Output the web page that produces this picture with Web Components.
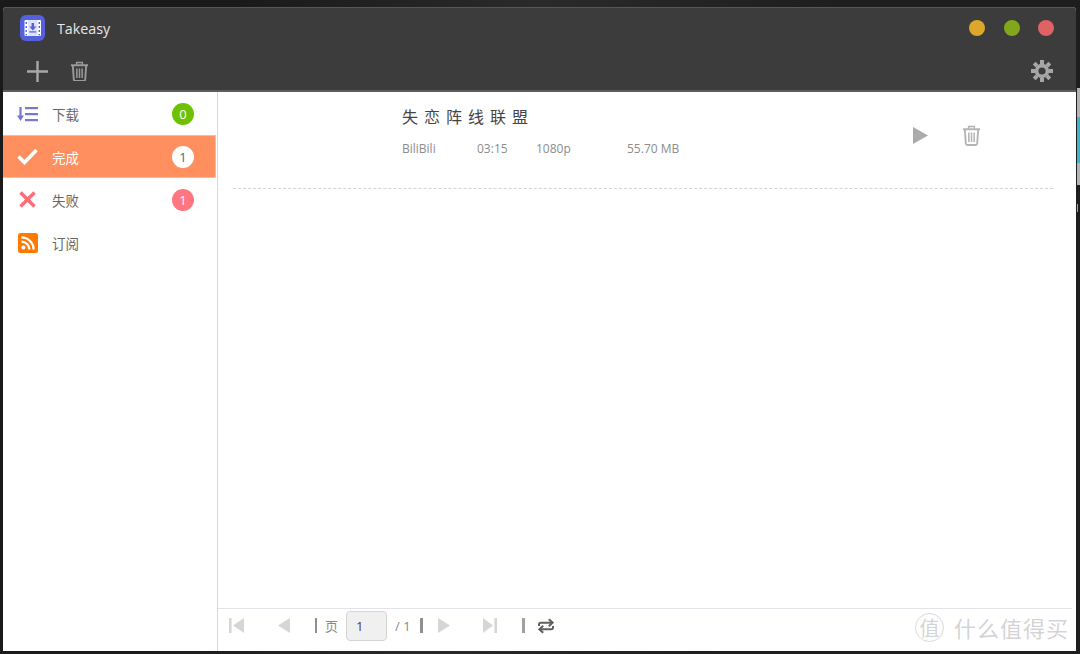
<!DOCTYPE html>
<html lang="zh">
<head>
<meta charset="utf-8">
<title>Takeasy</title>
<style>
    html, body { margin: 0; height: 100%; background: #1b1b1b; overflow: hidden; }
    body { font-family: "Open Sans", "Noto Sans CJK SC", sans-serif; }
</style>
</head>
<body>
<take-desktop>
    <take-window>
        <take-header slot="header"></take-header>
        <take-sidebar slot="side">
            <take-nav-item label="下载" icon="list" count="0" tone="green"></take-nav-item>
            <take-nav-item label="完成" icon="check" count="1" tone="white" active></take-nav-item>
            <take-nav-item label="失败" icon="cross" count="1" tone="red"></take-nav-item>
            <take-nav-item label="订阅" icon="rss"></take-nav-item>
        </take-sidebar>
        <take-task slot="main" name="失恋阵线联盟" source="BiliBili" duration="03:15" quality="1080p" size="55.70 MB"></take-task>
        <take-pager slot="footer"></take-pager>
    </take-window>
</take-desktop>

<script>
// Shared icon paths
const TRASH = (color, w) => `
    <svg width="${w}" height="${w * 22 / 20}" viewBox="0 0 20 22" fill="none" stroke="${color}">
        <path d="M1 4.5h18" stroke-width="2"/>
        <path d="M7 4V1.6h6V4" stroke-width="1.6"/>
        <path d="M3 5l1 14.5q.1 1.5 1.6 1.5h8.8q1.5 0 1.6-1.5L17 5" stroke-width="2"/>
        <path d="M7.2 8v10M10 8v10M12.8 8v10" stroke-width="1.6"/>
    </svg>`;

const NAV_ICONS = {
    list: `<svg width="21" height="16" viewBox="0 0 21 16" fill="#7878d2">
        <rect x="8" y="1" width="13" height="2.2"/><rect x="8" y="7" width="13" height="2.2"/><rect x="8" y="13" width="13" height="2.2"/>
        <rect x="2.4" y="1" width="2.2" height="10"/><path d="M0 9.5h7L3.5 15z"/></svg>`,
    check: `<svg width="21" height="17" viewBox="0 0 21 17" fill="none" stroke="#fff" stroke-width="3.6"><path d="M1.5 8.5l6 6L19.5 2"/></svg>`,
    cross: `<svg width="17" height="17" viewBox="0 0 17 17" fill="none" stroke="#fa6e78" stroke-width="3.4"><path d="M1.5 1.5l14 14M15.5 1.5l-14 14"/></svg>`,
    rss: `<svg width="20" height="20" viewBox="0 0 20 20"><rect width="20" height="20" rx="2.5" fill="#ff7a00"/>
        <circle cx="5.4" cy="14.6" r="2" fill="#fff"/>
        <path d="M3.4 8.6a8 8 0 0 1 8 8M3.4 4.4a12.2 12.2 0 0 1 12.2 12.2" fill="none" stroke="#fff" stroke-width="2.3"/></svg>`
};

class TakeDesktop extends HTMLElement {
    constructor() {
        super();
        this.attachShadow({mode: "open"}).innerHTML = `
            <style>
                :host {
                    display: block;
                    position: relative;
                    width: 1080px;
                    height: 654px;
                    box-sizing: border-box;
                    padding: 7px 4px 3px 3px;
                    background: linear-gradient(100deg, #1a1a1a 20%, #2a2a2a 45%, #1e1e1e 70%);
                }
                /* Sliver of the neighbouring window on the right edge */
                .peek {
                    position: absolute;
                    right: 0;
                    top: 88px;
                    width: 3px;
                    height: 97px;
                    background: linear-gradient(#b4b4b4 30%, #3fb3c9 30%, #3fb3c9 77%, #b4b4b4 77%);
                }
                .speck {
                    position: absolute;
                    left: 1077px;
                    top: 204px;
                    width: 1px;
                    height: 8px;
                    background: #c9a24a;
                }
            </style>
            <slot></slot>
            <div class="peek"></div>
            <div class="speck"></div>
        `;
    }
}

class TakeWindow extends HTMLElement {
    constructor() {
        super();
        this.attachShadow({mode: "open"}).innerHTML = `
            <style>
                :host {
                    display: grid;
                    grid-template-columns: 215px 1fr;
                    grid-template-rows: 85px 1fr 43px;
                    grid-template-areas: "header header" "side main" "side footer";
                    height: 100%;
                    background: #fff;
                    border-radius: 4px 4px 0 0;
                    overflow: hidden;
                    position: relative;
                }
                ::slotted([slot=header]) { grid-area: header; }
                ::slotted([slot=side]) { grid-area: side; }
                ::slotted([slot=main]) { grid-area: main; }
                ::slotted([slot=footer]) { grid-area: footer; }
                /* The site's watermark stamped over the corner of the shot */
                .mark {
                    position: absolute;
                    right: 7px;
                    bottom: 8px;
                    display: flex;
                    align-items: center;
                    gap: 10px;
                    color: rgba(150,150,150,.42);
                    font: 22px "Noto Sans CJK SC", sans-serif;
                    letter-spacing: 1px;
                }
                .seal {
                    width: 27px;
                    height: 27px;
                    border: 1px solid rgba(170,170,170,.45);
                    border-radius: 50%;
                    display: flex;
                    align-items: center;
                    justify-content: center;
                    font-size: 20px;
                    letter-spacing: 0;
                }
            </style>
            <slot name="header"></slot>
            <slot name="side"></slot>
            <slot name="main"></slot>
            <slot name="footer"></slot>
            <div class="mark"><span class="seal">值</span><span>什么值得买</span></div>
        `;
    }
}

class TakeHeader extends HTMLElement {
    constructor() {
        super();
        this.attachShadow({mode: "open"}).innerHTML = `
            <style>
                :host {
                    display: flex;
                    flex-direction: column;
                    background: #3c3c3c;
                    border-top: 1px solid #575757;
                    border-bottom: 2px solid #5e5e5e;
                    box-sizing: border-box;
                    color: #e6e6e6;
                }
                .title { display: flex; align-items: center; height: 40px; padding: 0 19px 0 17px; }
                .logo { display: block; margin-right: 12px; }
                .name { font: 14.3px "Open Sans", sans-serif; flex: 1; }
                .dots { display: flex; gap: 18.5px; margin-right: 3px; }
                .dots i { width: 16px; height: 16px; border-radius: 50%; }
                .tools { display: flex; align-items: center; flex: 1; padding: 4px 23px 0 24px; }
                .tools svg { display: block; }
                .plus { margin-right: 22px; }
                .gear { margin-left: auto; }
            </style>
            <div class="title">
                <svg class="logo" width="25" height="26" viewBox="0 0 25 26">
                    <rect width="25" height="26" rx="6" fill="#5560de"/>
                    <rect x="4.5" y="5" width="16.5" height="16" rx="1" fill="#fff"/>
                    <rect x="8" y="5" width="9.5" height="16" fill="#dfe2fb"/>
                    <g fill="#5560de">
                        <rect x="5.5" y="7" width="1.4" height="2"/><rect x="5.5" y="11" width="1.4" height="2"/><rect x="5.5" y="15" width="1.4" height="2"/><rect x="5.5" y="19" width="1.4" height="1.4"/>
                        <rect x="18.6" y="7" width="1.4" height="2"/><rect x="18.6" y="11" width="1.4" height="2"/><rect x="18.6" y="15" width="1.4" height="2"/><rect x="18.6" y="19" width="1.4" height="1.4"/>
                        <rect x="11.6" y="8" width="2.4" height="4"/><path d="M9.3 11.5h7L12.8 15.5z"/><rect x="9.3" y="16.3" width="7" height="1.2"/>
                    </g>
                </svg>
                <span class="name">Takeasy</span>
                <div class="dots">
                    <i style="background:#dca72a"></i>
                    <i style="background:#83a71a"></i>
                    <i style="background:#e06264"></i>
                </div>
            </div>
            <div class="tools">
                <svg class="plus" width="21" height="21" viewBox="0 0 21 21" stroke="#a8a8a8" stroke-width="2.4"><path d="M10.5 0v21M0 10.5h21"/></svg>
                ${TRASH("#9a9a9a", 19)}
                <svg class="gear" width="22" height="22" viewBox="0 0 22 22" fill="none" stroke="#a6a6a6">
                    <circle cx="11" cy="11" r="5.4" stroke-width="3.6"/>
                    <path d="M11 0v4M11 18v4M0 11h4M18 11h4M3.2 3.2l2.9 2.9M15.9 15.9l2.9 2.9M3.2 18.8l2.9-2.9M15.9 6.1l2.9-2.9" stroke-width="4"/>
                </svg>
            </div>
        `;
    }
}

class TakeSidebar extends HTMLElement {
    constructor() {
        super();
        this.attachShadow({mode: "open"}).innerHTML = `
            <style>
                :host {
                    display: flex;
                    flex-direction: column;
                    padding-right: 1px;
                    border-right: 1px solid #d8d8d8;
                    background: #fff;
                }
            </style>
            <slot></slot>
        `;
    }
}

class TakeNavItem extends HTMLElement {
    constructor() {
        super();
        const count = this.getAttribute('count');
        const tones = {
            green: 'background:#6cc200;color:#fff',
            white: 'background:#fff;color:#666',
            red: 'background:#ff7580;color:#fff'
        };
        this.attachShadow({mode: "open"}).innerHTML = `
            <style>
                :host {
                    display: flex;
                    align-items: center;
                    height: 43px;
                    box-sizing: border-box;
                    color: #666;
                    font: 13.5px "Noto Sans CJK SC", sans-serif;
                    --badge-gap: 22px;
                }
                :host([active]) {
                    background: #ff8f5e;
                    border: solid #ffb99a;
                    border-width: 1px 1px 1px 0;
                    color: #fff;
                    --badge-gap: 21px;
                }
                .icon { width: 49px; display: flex; justify-content: center; box-sizing: border-box; }
                .icon svg { display: block; }
                .label { flex: 1; }
                .badge {
                    width: 22px;
                    height: 22px;
                    border-radius: 50%;
                    margin-right: var(--badge-gap);
                    display: flex;
                    align-items: center;
                    justify-content: center;
                    font: 13px "Open Sans", sans-serif;
                }
            </style>
            <div class="icon">${NAV_ICONS[this.getAttribute('icon')]}</div>
            <span class="label">${this.getAttribute('label')}</span>
            ${count !== null ? `<span class="badge" style="${tones[this.getAttribute('tone')]}">${count}</span>` : ''}
        `;
    }
}

class TakeTask extends HTMLElement {
    constructor() {
        super();
        const attr = n => this.getAttribute(n);
        this.attachShadow({mode: "open"}).innerHTML = `
            <style>
                :host { display: block; padding: 0 23px 0 15px; background: #fff; }
                .row {
                    display: flex;
                    align-items: center;
                    height: 97px;
                    box-sizing: border-box;
                    border-bottom: 1px dashed #d4d4d4;
                }
                .info { margin-left: 169px; flex: 1; padding-bottom: 17px; }
                .name {
                    font: 16px/20px "Noto Sans CJK SC", sans-serif;
                    letter-spacing: 6px;
                    color: #444;
                    margin-bottom: 15px;
                }
                .meta { display: flex; font: 12px/16px "Open Sans", sans-serif; color: #8c8c8c; }
                .meta span:nth-child(1) { width: 75px; }
                .meta span:nth-child(2) { width: 59px; }
                .meta span:nth-child(3) { width: 91px; }
                .actions { display: flex; align-items: center; gap: 34px; margin-right: 72px; padding-bottom: 9px; }
                .actions svg { display: block; }
            </style>
            <div class="row">
                <div class="info">
                    <div class="name">${attr('name')}</div>
                    <div class="meta">
                        <span>${attr('source')}</span>
                        <span>${attr('duration')}</span>
                        <span>${attr('quality')}</span>
                        <span>${attr('size')}</span>
                    </div>
                </div>
                <div class="actions">
                    <svg width="15" height="17" viewBox="0 0 16 18" preserveAspectRatio="none"><path d="M0 0l16 9L0 18z" fill="#ababab"/></svg>
                    ${TRASH("#b4b4b4", 19)}
                </div>
            </div>
        `;
    }
}

class TakePager extends HTMLElement {
    constructor() {
        super();
        const grey = "#d6d6d6";
        this.attachShadow({mode: "open"}).innerHTML = `
            <style>
                :host {
                    display: flex;
                    align-items: center;
                    margin-right: 4px;
                    box-sizing: border-box;
                    border-top: 1px solid #e2e2e8;
                    padding: 0 0 9px 11px;
                    background: #fff;
                    color: #8a8a8a;
                    font: 13px "Noto Sans CJK SC", sans-serif;
                }
                svg { display: block; flex: none; }
                .sep { width: 2px; height: 15px; background: #8f8f8f; flex: none; }
                .page {
                    width: 41px;
                    height: 30px;
                    box-sizing: border-box;
                    border: 1px solid #d4d4d4;
                    border-radius: 4px;
                    background: #f0f0f0;
                    color: #444;
                    font: 13px "Open Sans", sans-serif;
                    line-height: 28px;
                    padding-left: 9px;
                    flex: none;
                }
                .total { font: 13px "Open Sans", sans-serif; }
            </style>
            <svg width="15" height="15" viewBox="0 0 15 15" fill="${grey}"><rect width="2.6" height="15"/><path d="M15 0v15L4 7.5z"/></svg>
            <svg style="margin-left:34px" width="12" height="15" viewBox="0 0 12 15" fill="${grey}"><path d="M12 0v15L0 7.5z"/></svg>
            <div class="sep" style="margin-left:25px"></div>
            <span style="margin-left:8px">页</span>
            <div class="page" style="margin-left:8px">1</div>
            <span class="total" style="margin-left:8px">/ 1</span>
            <div class="sep" style="margin-left:9px;width:3px"></div>
            <svg style="margin-left:15px" width="12" height="15" viewBox="0 0 12 15" fill="${grey}"><path d="M0 0v15l12-7.5z"/></svg>
            <svg style="margin-left:33px" width="14" height="15" viewBox="0 0 14 15" fill="${grey}"><path d="M0 0v15l10-7.5z"/><rect x="11.4" width="2.6" height="15"/></svg>
            <div class="sep" style="margin-left:25px;width:3px;background:#a0a0a0"></div>
            <svg style="margin-left:13px" width="16" height="16" viewBox="0 0 17 16" fill="none" stroke="#5f5f5f" stroke-width="2.2">
                <path d="M15 4.5H3Q1 4.5 1 6.5V8M2 11.5h12q2 0 2-2V8"/>
                <path d="M11.5 0.8l4 3.7-4 3.7M5.5 7.8l-4 3.7 4 3.7"/>
            </svg>
        `;
    }
}

customElements.define('take-desktop', TakeDesktop);
customElements.define('take-window', TakeWindow);
customElements.define('take-header', TakeHeader);
customElements.define('take-sidebar', TakeSidebar);
customElements.define('take-nav-item', TakeNavItem);
customElements.define('take-task', TakeTask);
customElements.define('take-pager', TakePager);
</script>
</body>
</html>
